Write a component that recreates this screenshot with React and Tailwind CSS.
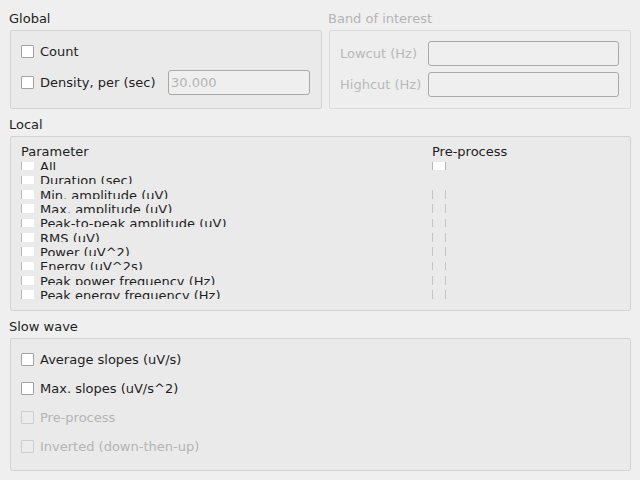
import React from "react";

const params = [
  { label: "All", pre: "on" },
  { label: "Duration (sec)", pre: "none" },
  { label: "Min. amplitude (uV)", pre: "off" },
  { label: "Max. amplitude (uV)", pre: "off" },
  { label: "Peak-to-peak amplitude (uV)", pre: "off" },
  { label: "RMS (uV)", pre: "off" },
  { label: "Power (uV^2)", pre: "off" },
  { label: "Energy (uV^2s)", pre: "off" },
  { label: "Peak power frequency (Hz)", pre: "off" },
  { label: "Peak energy frequency (Hz)", pre: "off" },
];

const Check = ({ disabled }) => (
  <span
    className={`inline-block w-[13px] h-[13px] shrink-0 border rounded-[1px] ${
      disabled ? "border-[#cdcdcd] bg-[#ececec]" : "border-[#a3a3a3] bg-white"
    }`}
  />
);

const Label = ({ children, disabled }) => (
  <div
    className={`h-[15px] leading-[15px] mb-[4px] ml-[-1px] ${
      disabled ? "text-[#b4b4b4]" : "text-[#1e1e1e]"
    }`}
  >
    {children}
  </div>
);

const Input = ({ value, className }) => (
  <div
    className={`h-[25px] border border-[#a9a9a9] rounded-[3px] bg-[#efefef] flex items-center px-[2px] text-[#b4b4b4] ${className}`}
  >
    {value}
  </div>
);

export default function App() {
  return (
    <div className="w-[640px] h-[480px] bg-[#efefef] font-['DejaVu_Sans',sans-serif] text-[13px] text-[#1e1e1e] pl-[10px] pr-[9px] pt-[11px] overflow-hidden">
      {/* Global + Band of interest */}
      <div className="flex gap-[7px]">
        <div className="w-[312px]">
          <Label>Global</Label>
          <div className="h-[79px] border border-[#d3d3d3] rounded-[2px] bg-[#eaeaea] pl-[10px] pr-[11px] pt-[8px] flex flex-col gap-[6px]">
            <div className="h-[25px] flex items-center gap-[6px]">
              <Check />
              <span>Count</span>
            </div>
            <div className="h-[25px] flex items-center">
              <Check />
              <span className="ml-[6px]">Density, per (sec)</span>
              <Input value="30.000" className="ml-auto w-[142px]" />
            </div>
          </div>
        </div>
        <div className="w-[302px]">
          <Label disabled>Band of interest</Label>
          <div className="h-[79px] border border-[#dadada] rounded-[2px] bg-[#eeeeee] pl-[10px] pr-[11px] pt-[10px] flex flex-col gap-[6px] text-[#b8b8b8]">
            <div className="h-[25px] flex items-center">
              <span>Lowcut (Hz)</span>
              <Input value="" className="ml-auto w-[191px]" />
            </div>
            <div className="h-[25px] flex items-center">
              <span>Highcut (Hz)</span>
              <Input value="" className="ml-auto w-[191px]" />
            </div>
          </div>
        </div>
      </div>

      {/* Local */}
      <div className="mt-[8px]">
        <Label>Local</Label>
        <div className="h-[175px] border border-[#d3d3d3] rounded-[2px] bg-[#eaeaea] pl-[10px] pt-[7px]">
          <div className="flex h-[15px] leading-[15px]">
            <span className="w-[411px]">Parameter</span>
            <span>Pre-process</span>
          </div>
          {params.map((p) => (
            <div key={p.label} className="h-[14.33px] pt-[2.5px]">
              <div className="h-[8.5px] overflow-hidden flex">
                <div className="w-[411px] flex -mt-[2.5px] leading-[15px] h-[15px]">
                  <span className="w-[13px] h-[13px] mt-[1px] shrink-0 bg-white border-l border-[#b5b5b5]" />
                  <span className="ml-[6px] whitespace-nowrap">{p.label}</span>
                </div>
                {p.pre === "on" && (
                  <span className="w-[14px] h-[8.5px] bg-white border-x border-[#b5b5b5]" />
                )}
                {p.pre === "off" && (
                  <span className="w-[14px] h-[8.5px] border-x border-[#c4c4c4]" />
                )}
              </div>
            </div>
          ))}
        </div>
      </div>

      {/* Slow wave */}
      <div className="mt-[8px]">
        <Label>Slow wave</Label>
        <div className="h-[133px] border border-[#d3d3d3] rounded-[2px] bg-[#eaeaea] pl-[10px] pt-[8px] flex flex-col gap-[4px]">
          <div className="h-[25px] flex items-center gap-[6px]">
            <Check />
            <span>Average slopes (uV/s)</span>
          </div>
          <div className="h-[25px] flex items-center gap-[6px]">
            <Check />
            <span>Max. slopes (uV/s^2)</span>
          </div>
          <div className="h-[25px] flex items-center gap-[6px] text-[#b4b4b4]">
            <Check disabled />
            <span>Pre-process</span>
          </div>
          <div className="h-[25px] flex items-center gap-[6px] text-[#b4b4b4]">
            <Check disabled />
            <span>Inverted (down-then-up)</span>
          </div>
        </div>
      </div>
    </div>
  );
}
